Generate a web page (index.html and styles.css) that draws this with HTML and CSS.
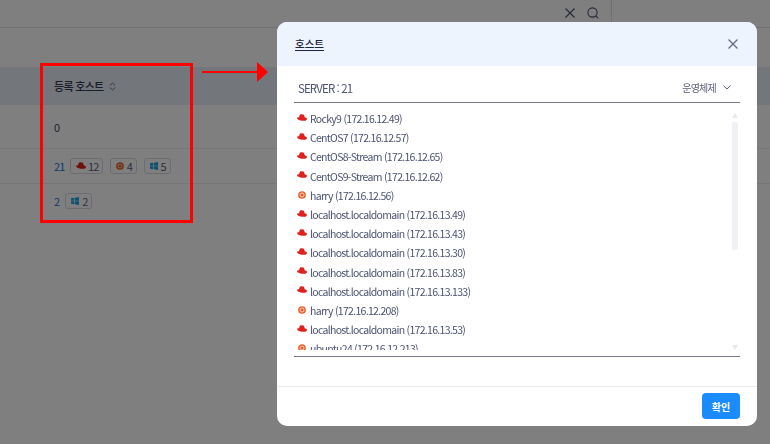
FILE: index.html
```html
<!DOCTYPE html>
<html lang="ko">
<head>
<meta charset="utf-8">
<title>호스트</title>
<link rel="stylesheet" href="styles.css">
</head>
<body>
<svg class="defs" width="0" height="0" aria-hidden="true">
  <symbol id="hat" viewBox="0 0 16 11">
    <path fill="#e0201c" d="M5.200.6C6.400 0 8 .8 9.500.6c1.200-.1 1.800.6 2.100 1.800l.7 2.600c1.800.6 3.500 1.300 3.600 2.600.1 1.700-1.600 2.900-4.600 3.200C7.300 11.200 2.400 9.400.7 7.700-.3 6.700.2 5.400 1.500 5.200c.6-.1 1.100.1 1.600.2.500-1.500 1.100-4 2.100-4.800Z"/>
  </symbol>
  <symbol id="ubuntu" viewBox="0 0 12 12">
    <circle cx="6" cy="6" r="5.800" fill="#e8622c"/>
    <circle cx="6" cy="6" r="3" fill="none" stroke="#fbe3d8" stroke-width="1.200"/>
    <circle cx="6" cy="6" r="1" fill="#e8622c"/>
  </symbol>
  <symbol id="win" viewBox="0 0 12 12">
    <path fill="#18a4e0" d="M0 2 5 1.200V5.500H0ZM6 1 12 0V5.500H6ZM0 6.500H5V10.800L0 10ZM6 6.500H12V12L6 11Z"/>
  </symbol>
</svg>

<div class="page">
  <header class="topbar">
    <div class="tools">
      <svg class="tool" viewBox="0 0 12 12"><path d="M1.500 1.500 10.500 10.500M10.500 1.500 1.500 10.500"/></svg>
      <svg class="tool" viewBox="0 0 12 12"><circle cx="5.500" cy="5.500" r="4.600"/><path d="M8.800 8.800 11.300 11.300"/></svg>
    </div>
    <span class="divider"></span>
  </header>
  <section class="table">
    <div class="thead">등록 호스트
      <svg class="sort" viewBox="0 0 8 10"><path d="M1 3.700 4 1l3 2.700M1 6.300 4 9l3-2.700"/></svg>
    </div>
    <div class="row row-first"><span>0</span></div>
    <div class="row row-second">
      <a class="count">21</a>
      <span class="tag"><svg class="tag-icon wide"><use href="#hat"/></svg>12</span>
      <span class="tag"><svg class="tag-icon"><use href="#ubuntu"/></svg>4</span>
      <span class="tag"><svg class="tag-icon"><use href="#win"/></svg>5</span>
    </div>
    <div class="row row-third">
      <a class="count">2</a>
      <span class="tag"><svg class="tag-icon"><use href="#win"/></svg>2</span>
    </div>
  </section>
</div>

<div class="overlay"></div>
<div class="callout"></div>
<svg class="arrow" viewBox="0 0 68 20"><path d="M0 9H55V0L66 10 55 20V11H0Z" fill="#ff0000"/></svg>

<div class="modal">
  <div class="modal-head">
    <h2 class="modal-title">호스트</h2>
    <svg class="modal-close" viewBox="0 0 12 12"><path d="M1.500 1.500 10.500 10.500M10.500 1.500 1.500 10.500"/></svg>
  </div>
  <div class="modal-body">
    <div class="list-head">
      <span class="server">SERVER : 21</span>
      <span class="os">운영체제
        <svg class="chev" viewBox="0 0 8 5"><path d="M.5.700 4 4 7.500.700"/></svg>
      </span>
    </div>
    <div class="list-wrap">
      <ul class="hosts">
        <li><svg class="os-icon"><use href="#hat"/></svg>Rocky9 (172.16.12.49)</li>
        <li><svg class="os-icon"><use href="#hat"/></svg>CentOS7 (172.16.12.57)</li>
        <li><svg class="os-icon"><use href="#hat"/></svg>CentOS8-Stream (172.16.12.65)</li>
        <li><svg class="os-icon"><use href="#hat"/></svg>CentOS9-Stream (172.16.12.62)</li>
        <li><svg class="os-icon round"><use href="#ubuntu"/></svg>harry (172.16.12.56)</li>
        <li><svg class="os-icon"><use href="#hat"/></svg>localhost.localdomain (172.16.13.49)</li>
        <li><svg class="os-icon"><use href="#hat"/></svg>localhost.localdomain (172.16.13.43)</li>
        <li><svg class="os-icon"><use href="#hat"/></svg>localhost.localdomain (172.16.13.30)</li>
        <li><svg class="os-icon"><use href="#hat"/></svg>localhost.localdomain (172.16.13.83)</li>
        <li><svg class="os-icon"><use href="#hat"/></svg>localhost.localdomain (172.16.13.133)</li>
        <li><svg class="os-icon round"><use href="#ubuntu"/></svg>harry (172.16.12.208)</li>
        <li><svg class="os-icon"><use href="#hat"/></svg>localhost.localdomain (172.16.13.53)</li>
        <li><svg class="os-icon round"><use href="#ubuntu"/></svg>ubuntu24 (172.16.12.213)</li>
      </ul>
      <div class="scrollbar">
        <span class="arrow-up"></span>
        <span class="track"><span class="thumb"></span></span>
        <span class="arrow-down"></span>
      </div>
    </div>
  </div>
  <div class="modal-foot">
    <button class="ok" type="button">확인</button>
  </div>
</div>
</body>
</html>
```

FILE: styles.css
```css
* { box-sizing: border-box; }
html, body { margin: 0; padding: 0; height: 100%; overflow: hidden; }
body {
  font-family: "Noto Sans CJK KR", "Noto Sans", sans-serif;
  font-size: 11px;
  color: #3f4560;
  background: #fff;
}
.defs { position: absolute; }

.topbar {
  height: 28px;
  border-bottom: 1px solid #e2e2e2;
  display: flex;
  justify-content: flex-end;
  align-items: flex-start;
  padding-right: 158px;
}
.tools { display: flex; gap: 11px; padding-top: 7px; padding-right: 12px; }
.tool { width: 12px; height: 12px; fill: none; stroke: #4a5070; stroke-width: 1.100; }
.divider { width: 1px; height: 22px; background: #e2e2e2; }

.table { margin-top: 39px; }
.thead {
  height: 38px;
  background: #e6ecf6;
  display: flex;
  align-items: center;
  padding-left: 54px;
  gap: 6px;
  font-weight: 500;
  font-size: 11px;
  letter-spacing: -.7px;
  color: #333a52;
}
.sort { width: 7px; height: 9px; fill: none; stroke: #5c6278; stroke-width: 1; }
.row {
  display: flex;
  align-items: center;
  padding-left: 54px;
  border-bottom: 1px solid #ececec;
}
.row-first { height: 44px; }
.row-second { height: 35px; padding-bottom: 1px; }
.row-third { height: 33px; border-bottom: 0; }
.count { color: #2b6fd6; margin-right: 6px; font-size: 11px; letter-spacing: -.9px; }
.tag {
  display: inline-flex;
  align-items: center;
  gap: 3px;
  height: 16px;
  padding: 0 4px 0 5px;
  margin-right: 6.500px;
  border: 1px solid #d5d8e0;
  border-radius: 3px;
  color: #5a607a;
  font-size: 11px;
  letter-spacing: -.9px;
}
.tag-icon { width: 8px; height: 8px; }
.tag-icon.wide { width: 10px; height: 7px; margin-right: -1.500px; }

.overlay { position: fixed; inset: 0; background: rgba(0, 0, 0, .5); }
.callout {
  position: absolute;
  left: 40px;
  top: 63px;
  width: 153px;
  height: 160px;
  border: 3px solid #ff0000;
}
.arrow { position: absolute; left: 202px; top: 62px; width: 68px; height: 20px; }

.modal {
  position: absolute;
  left: 277px;
  top: 22px;
  width: 480px;
  height: 404px;
  background: #fff;
  border-radius: 10px;
  overflow: hidden;
  display: flex;
  flex-direction: column;
}
.modal-head {
  height: 44px;
  flex: none;
  background: #edf4fe;
  display: flex;
  align-items: center;
  justify-content: space-between;
  padding: 0 18px;
}
.modal-title {
  margin: -2px 0 0;
  font-size: 10.500px;
  font-weight: 500;
  color: #1c2540;
  text-decoration: underline;
  text-underline-offset: 2px;
}
.modal-close { width: 12px; height: 12px; fill: none; stroke: #5f6685; stroke-width: 1.200; }
.modal-body { flex: 1; padding: 0 17px; min-height: 0; }
.list-head {
  height: 37px;
  border-bottom: 1px solid #7a7a8c;
  display: flex;
  align-items: center;
  justify-content: space-between;
  padding: 7px 9px 0 4px;
}
.server { font-size: 11.500px; letter-spacing: -.9px; color: #4c5372; }
.os { font-size: 10px; letter-spacing: -.75px; color: #5a607a; display: inline-flex; align-items: center; gap: 7px; }
.chev { width: 8px; height: 5px; fill: none; stroke: #5a607a; stroke-width: 1; }
.list-wrap {
  position: relative;
  height: 254px;
  border-bottom: 1px solid #7a7a8c;
}
.hosts {
  list-style: none;
  margin: 0;
  padding: 6px 0 0 3px;
  height: 247px;
  overflow: hidden;
}
.hosts li {
  height: 19.200px;
  line-height: 19.200px;
  display: flex;
  align-items: center;
  color: #4c5372;
  font-size: 10.500px;
  letter-spacing: -.7px;
  white-space: nowrap;
}
.os-icon { width: 10px; height: 7px; margin-right: 3px; margin-top: -3px; flex: none; }
.os-icon.round { width: 8px; height: 8px; margin: -1px 4px 0 1px; }
.scrollbar {
  position: absolute;
  right: 2px;
  top: 10px;
  bottom: 6px;
  width: 6px;
  display: flex;
  flex-direction: column;
  align-items: center;
}
.arrow-up, .arrow-down { width: 0; height: 0; border-left: 3px solid transparent; border-right: 3px solid transparent; }
.arrow-up { border-bottom: 5px solid #e6e8ee; }
.arrow-down { border-top: 5px solid #e6e8ee; }
.track { flex: 1; width: 6px; margin: 4px 0 3px; }
.thumb { display: block; width: 6px; height: 128px; background: #f0f1f4; border-radius: 2px; }
.modal-foot {
  height: 40px;
  flex: none;
  border-top: 1px solid #e9ebf1;
  display: flex;
  justify-content: flex-end;
  align-items: flex-start;
  padding: 6px 17px 0 0;
}
.ok {
  width: 38px;
  height: 26px;
  border: 0;
  border-radius: 4px;
  background: #1a8cff;
  color: #fff;
  font: 700 10px "Noto Sans CJK KR", "Noto Sans", sans-serif;
  padding: 0;
}
```
